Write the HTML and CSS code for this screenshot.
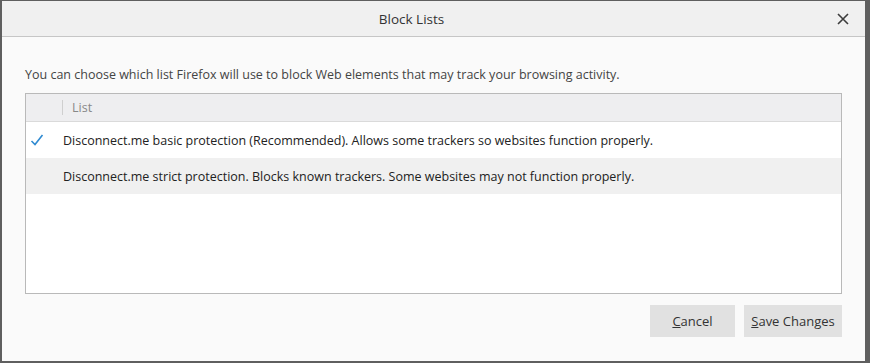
FILE: index.html
```html
<!DOCTYPE html>
<html lang="en">

<head>
    <meta charset="UTF-8" />
    <title>Block Lists</title>
    <link rel="stylesheet" href="styles.css">
</head>

<body>
    <div class="dialog">
        <div class="titlebar">
            <span class="title">Block Lists</span>
            <span class="close">
                <svg width="12" height="12" viewBox="0 0 12 12">
                    <path d="M1 1L11 11M11 1L1 11" stroke="#3c3c3c" stroke-width="1.6" fill="none" />
                </svg>
            </span>
        </div>

        <div class="content">
            <p class="desc">You can choose which list Firefox will use to block Web elements that may track your browsing activity.</p>

            <div class="list">
                <div class="list-head">
                    <div class="col-check"></div>
                    <div class="col-name">List</div>
                </div>
                <div class="row">
                    <div class="col-check">
                        <svg width="14" height="14" viewBox="0 0 14 14">
                            <path d="M1.5 8L5 11.5L12.5 2" stroke="#2f8ad1" stroke-width="1.6" fill="none" />
                        </svg>
                    </div>
                    <div class="col-text">Disconnect.me basic protection (Recommended). Allows some trackers so websites function properly.</div>
                </div>
                <div class="row alt">
                    <div class="col-check"></div>
                    <div class="col-text">Disconnect.me strict protection. Blocks known trackers. Some websites may not function properly.</div>
                </div>
            </div>

            <div class="actions">
                <button type="button"><u>C</u>ancel</button>
                <button type="button"><u>S</u>ave Changes</button>
            </div>
        </div>
    </div>
</body>

</html>
```

FILE: styles.css
```css
* {
    box-sizing: border-box;
}

html,
body {
    margin: 0;
    height: 100%;
}

body {
    background: #5f5f5f;
    padding: 1px 5px 2px 2px;
    font-family: "Open Sans", "Noto Sans", sans-serif;
    font-size: 12.5px;
    color: #333;
}

.dialog {
    height: 100%;
    background: #fafafa;
    display: flex;
    flex-direction: column;
}

.titlebar {
    height: 36px;
    background: #f0f0f0;
    border-bottom: 1px solid #c6c6c6;
    display: flex;
    align-items: center;
    justify-content: center;
    padding-right: 44px;
    position: relative;
}

.title {
    font-size: 13.5px;
    color: #333;
}

.close {
    position: absolute;
    right: 16px;
    top: 12px;
    width: 12px;
    height: 12px;
    display: flex;
}

.content {
    padding: 0 23px 0 23px;
    flex: 1;
    display: flex;
    flex-direction: column;
}

.desc {
    margin: 30px 0 10px;
    line-height: 16px;
    color: #444;
}

.list {
    height: 201px;
    border: 1px solid #b9b9b9;
    background: #fff;
}

.list-head {
    height: 28px;
    background: #eeeef0;
    border-bottom: 1px solid #dadada;
    display: flex;
    align-items: center;
    color: #888;
}

.list-head .col-check {
    height: 15px;
    border-right: 1px solid #cfcfcf;
}

.col-check {
    width: 37px;
    display: flex;
    align-items: center;
    padding-left: 3px;
}

.col-name {
    padding-left: 9px;
}

.row {
    height: 36px;
    display: flex;
    align-items: center;
}

.row .col-check {
    padding-left: 4px;
}

.row.alt {
    background: #f0f0f0;
}

.col-text {
    color: #222;
}

.actions {
    display: flex;
    justify-content: flex-end;
    gap: 9px;
    margin-top: 11px;
}

.actions button {
    font-family: inherit;
    font-size: 13px;
    color: #333;
    background: #e1e1e1;
    border: none;
    height: 32px;
    padding: 0;
    white-space: nowrap;
}

.actions button:first-child {
    width: 85px;
}

.actions button:last-child {
    width: 98px;
}
```
